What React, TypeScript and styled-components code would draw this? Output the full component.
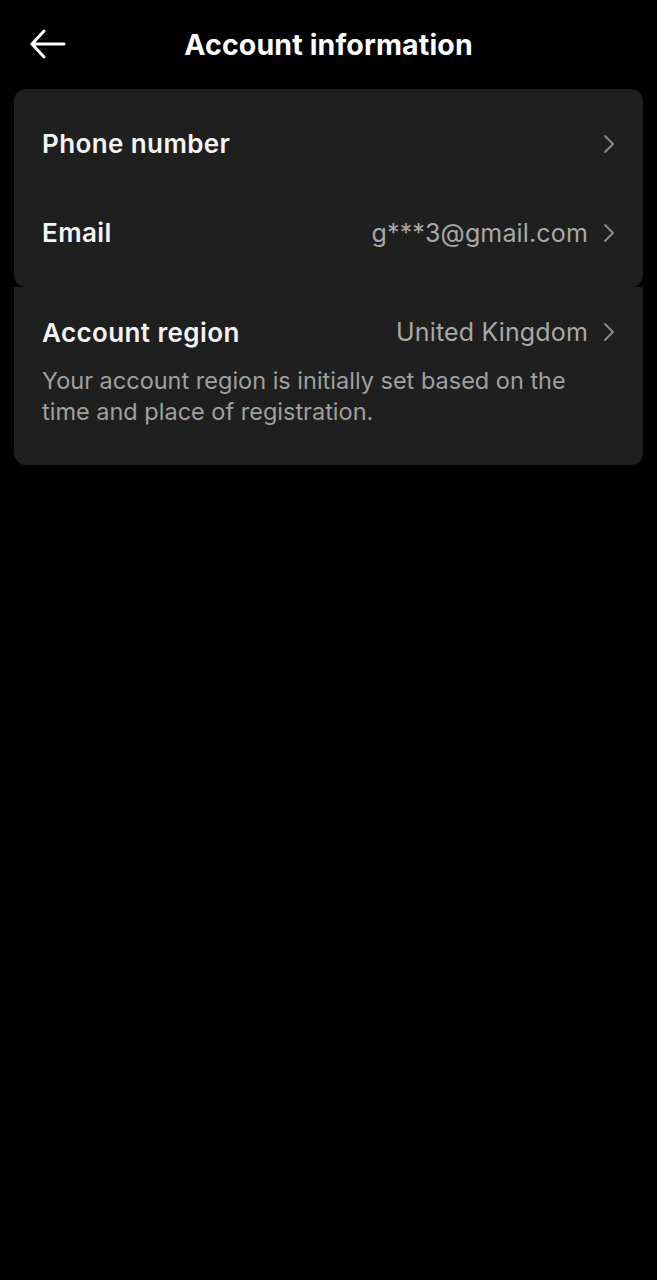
import React from 'react'
import styled, { createGlobalStyle } from 'styled-components'

const GlobalStyle = createGlobalStyle`
  html, body {
    margin: 0;
    padding: 0;
    background: #000;
  }
  body {
    font-family: Inter, Roboto, 'Noto Sans', 'Liberation Sans', sans-serif;
    -webkit-font-smoothing: antialiased;
  }
`

const Screen = styled.div`
  width: 657px;
  min-height: 1280px;
  background: #000;
  color: #fff;
`

const Header = styled.header`
  position: relative;
  height: 89px;
  display: flex;
  align-items: center;
  justify-content: center;
  padding-bottom: 1px;
  box-sizing: border-box;
`

const BackButton = styled.button`
  position: absolute;
  left: 28px;
  top: 27px;
  width: 40px;
  height: 34px;
  padding: 0;
  border: none;
  background: none;
  display: flex;
  align-items: center;
  justify-content: center;
`

const Title = styled.h1`
  margin: 0;
  font-size: 28.5px;
  font-weight: 700;
  letter-spacing: 0.15px;
  color: #fff;
`

const Card = styled.section<{ joinTop?: boolean }>`
  margin: 0 14px;
  background: #1f1f1f;
  border-radius: ${({ joinTop }) => (joinTop ? '0 0 12px 12px' : '12px')};
  padding: ${({ joinTop }) => (joinTop ? '28px 28px 38px' : '10px 28px')};
`

const Row = styled.div<{ compact?: boolean }>`
  height: ${({ compact }) => (compact ? '34px' : '89px')};
  display: flex;
  align-items: center;
  justify-content: space-between;
`

const Label = styled.span`
  font-size: 26px;
  font-weight: 600;
  letter-spacing: 0.4px;
  color: #f4f4f4;
`

const Trailing = styled.div`
  display: flex;
  align-items: center;
  gap: 15px;
`

const Value = styled.span`
  font-size: 25px;
  font-weight: 400;
  letter-spacing: 0.15px;
  color: #a8a8a8;
`

const Description = styled.p`
  margin: 16px 0 0;
  font-size: 23.5px;
  line-height: 31px;
  color: #a0a0a0;
`

const Chevron = () => (
  <svg width="12" height="20" viewBox="0 0 12 20" fill="none">
    <path d="M2 2l8 8-8 8" stroke="#8a8a8a" strokeWidth="2" strokeLinecap="round" strokeLinejoin="round" />
  </svg>
)

const BackArrow = () => (
  <svg width="38" height="30" viewBox="0 0 38 30" fill="none">
    <path d="M35 15H4M15 2L3 15l12 13" stroke="#fff" strokeWidth="3" strokeLinecap="round" strokeLinejoin="round" />
  </svg>
)

function SettingRow({ label, value, compact }: { label: string; value?: string; compact?: boolean }) {
  return (
    <Row compact={compact}>
      <Label>{label}</Label>
      <Trailing>
        {value && <Value>{value}</Value>}
        <Chevron />
      </Trailing>
    </Row>
  )
}

export default function App() {
  return (
    <Screen>
      <GlobalStyle />
      <Header>
        <BackButton aria-label="Back">
          <BackArrow />
        </BackButton>
        <Title>Account information</Title>
      </Header>
      <Card>
        <SettingRow label="Phone number" />
        <SettingRow label="Email" value="g***3@gmail.com" />
      </Card>
      <Card joinTop>
        <SettingRow label="Account region" value="United Kingdom" compact />
        <Description>
          Your account region is initially set based on the
          <br />
          time and place of registration.
        </Description>
      </Card>
    </Screen>
  )
}
